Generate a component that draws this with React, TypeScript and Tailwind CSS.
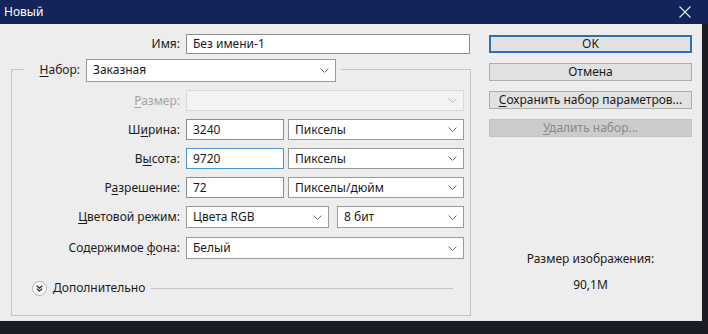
import React from "react";

const font = { fontFamily: '"Noto Sans", "Open Sans", sans-serif' };

function Chevron({ faded = false }: { faded?: boolean }) {
  return (
    <svg width="9" height="5" viewBox="0 0 9 5" className="shrink-0">
      <polyline
        points="0.5,0.5 4.5,4.5 8.5,0.5"
        fill="none"
        stroke={faded ? "#bdbdbd" : "#6b6b6b"}
        strokeWidth="1"
      />
    </svg>
  );
}

function Select({ value, w, h = "h-[21px]" }: { value: string; w: string; h?: string }) {
  return (
    <div className={`${w} ${h} flex items-center justify-between border border-[#9a9a9a] bg-white pl-[6px] pr-[6px] text-[12px] text-[#1b1b1b]`}>
      <span>{value}</span>
      <Chevron />
    </div>
  );
}

function Input({ value, w, focused = false }: { value: string; w: string; focused?: boolean }) {
  return (
    <div
      className={`${w} h-[21px] flex items-center border bg-white pl-[6px] text-[12px] text-[#1b1b1b] ${
        focused ? "border-[#4b94cf]" : "border-[#8c8c8c]"
      }`}
    >
      {value}
    </div>
  );
}

function Label({ children, disabled = false }: { children: React.ReactNode; disabled?: boolean }) {
  return (
    <div className={`w-[174px] pr-[6px] text-right text-[12px] ${disabled ? "text-[#a3a3a3]" : "text-[#1b1b1b]"}`}>
      {children}
    </div>
  );
}

function Btn({ children, primary = false, disabled = false }: { children: React.ReactNode; primary?: boolean; disabled?: boolean }) {
  return (
    <div
      className={`h-[18px] w-[203px] flex items-center justify-center text-[12px] ${
        disabled
          ? "bg-[#cccccc] border border-[#c2c2c2] text-[#8a8a8a]"
          : primary
          ? "bg-[#e1e1e1] border-2 border-[#2a72b0] text-[#1b1b1b]"
          : "bg-[#e1e1e1] border border-[#adadad] text-[#1b1b1b]"
      }`}
    >
      {children}
    </div>
  );
}

export default function App() {
  return (
    <div className="w-[708px] h-[334px] bg-[#1b1c25] overflow-hidden" style={font}>
      {/* Title bar */}
      <div className="h-[24px] bg-[#13245b] flex items-center justify-between pl-[4px] pr-[17px]">
        <span className="text-white text-[12px]">Новый</span>
        <svg width="12" height="12" viewBox="0 0 12 12">
          <path d="M0.5 0.5L11.5 11.5M11.5 0.5L0.5 11.5" stroke="#e8e8f0" strokeWidth="1.1" />
        </svg>
      </div>

      {/* Body */}
      <div className="w-[702px] h-[297px] bg-[#ededed] border-r border-b border-[#e4e6f2] flex">
        {/* Left column */}
        <div className="w-[489px] flex flex-col">
          <div className="mt-[10px] h-[20px] flex items-center">
            <div className="w-[186px] pr-[6px] text-right text-[12px] text-[#1b1b1b]">Имя:</div>
            <div className="w-[284px] h-[20px] flex items-center border border-[#8c8c8c] bg-white pl-[6px] text-[12px] text-[#1b1b1b]">
              Без имени-1
            </div>
          </div>

          {/* Group box */}
          <div className="ml-[11px] mt-[15px] w-[460px] h-[247px] border border-[#c4c4c4] flex flex-col">
            <div className="-mt-[11px] ml-[12px] w-[317px] h-[22px] bg-[#ededed] flex items-center">
              <div className="w-[62px] pr-[6px] text-right text-[12px] text-[#1b1b1b]">
                <span className="underline underline-offset-2">Н</span>абор:
              </div>
              <Select value="Заказная" w="w-[250px]" h="h-[23px]" />
            </div>

            <div className="mt-[9px] flex flex-col gap-[8px]">
              <div className="h-[21px] flex items-center">
                <Label disabled>
                  <span className="underline underline-offset-2">Р</span>азмер:
                </Label>
                <div className="w-[278px] h-[21px] flex items-center justify-end border border-[#d9d9d9] bg-[#f3f3f3] pr-[6px]">
                  <Chevron faded />
                </div>
              </div>

              <div className="h-[21px] flex items-center">
                <Label>
                  Ш<span className="underline underline-offset-2">и</span>рина:
                </Label>
                <Input value="3240" w="w-[98px]" />
                <div className="w-[4px]" />
                <Select value="Пикселы" w="w-[176px]" />
              </div>

              <div className="h-[21px] flex items-center">
                <Label>
                  В<span className="underline underline-offset-2">ы</span>сота:
                </Label>
                <Input value="9720" w="w-[98px]" focused />
                <div className="w-[4px]" />
                <Select value="Пикселы" w="w-[176px]" />
              </div>

              <div className="h-[21px] flex items-center">
                <Label>
                  Р<span className="underline underline-offset-2">а</span>зрешение:
                </Label>
                <Input value="72" w="w-[98px]" />
                <div className="w-[4px]" />
                <Select value="Пикселы/дюйм" w="w-[176px]" />
              </div>

              <div className="h-[22px] flex items-center">
                <Label>
                  <span className="underline underline-offset-2">Ц</span>ветовой режим:
                </Label>
                <Select value="Цвета RGB" w="w-[143px]" h="h-[22px]" />
                <div className="w-[8px]" />
                <Select value="8 бит" w="w-[127px]" h="h-[22px]" />
              </div>

              <div className="mt-[1px] h-[22px] flex items-center">
                <Label>
                  Содержимое <span className="underline underline-offset-2">ф</span>она:
                </Label>
                <Select value="Белый" w="w-[278px]" h="h-[22px]" />
              </div>
            </div>

            <div className="mt-[20px] ml-[20px] flex items-center">
              <div className="w-[15px] h-[15px] rounded-full border border-[#b5b5b5] bg-[#fafafa] flex items-center justify-center">
                <svg width="7" height="7" viewBox="0 0 7 7">
                  <polyline points="0.8,0.8 3.5,3.2 6.2,0.8" fill="none" stroke="#222" strokeWidth="1.2" />
                  <polyline points="0.8,3.6 3.5,6 6.2,3.6" fill="none" stroke="#222" strokeWidth="1.2" />
                </svg>
              </div>
              <span className="ml-[6px] text-[12px] text-[#1b1b1b]">Дополнительно</span>
              <div className="ml-[6px] w-[302px] h-px bg-[#c4c4c4]" />
            </div>
          </div>
        </div>

        {/* Right column */}
        <div className="flex flex-col">
          <div className="mt-[11px] flex flex-col gap-[10px]">
            <Btn primary>OK</Btn>
            <Btn>Отмена</Btn>
            <Btn>
              <span>
                <span className="underline underline-offset-2">С</span>охранить набор параметров...
              </span>
            </Btn>
            <Btn disabled>
              <span>
                <span className="underline underline-offset-2">У</span>далить набор...
              </span>
            </Btn>
          </div>
          <div className="mt-[113px] w-[203px] flex flex-col items-center text-[12px] text-[#1b1b1b]">
            <div>Размер изображения:</div>
            <div className="mt-[8px]">90,1M</div>
          </div>
        </div>
      </div>
    </div>
  );
}
